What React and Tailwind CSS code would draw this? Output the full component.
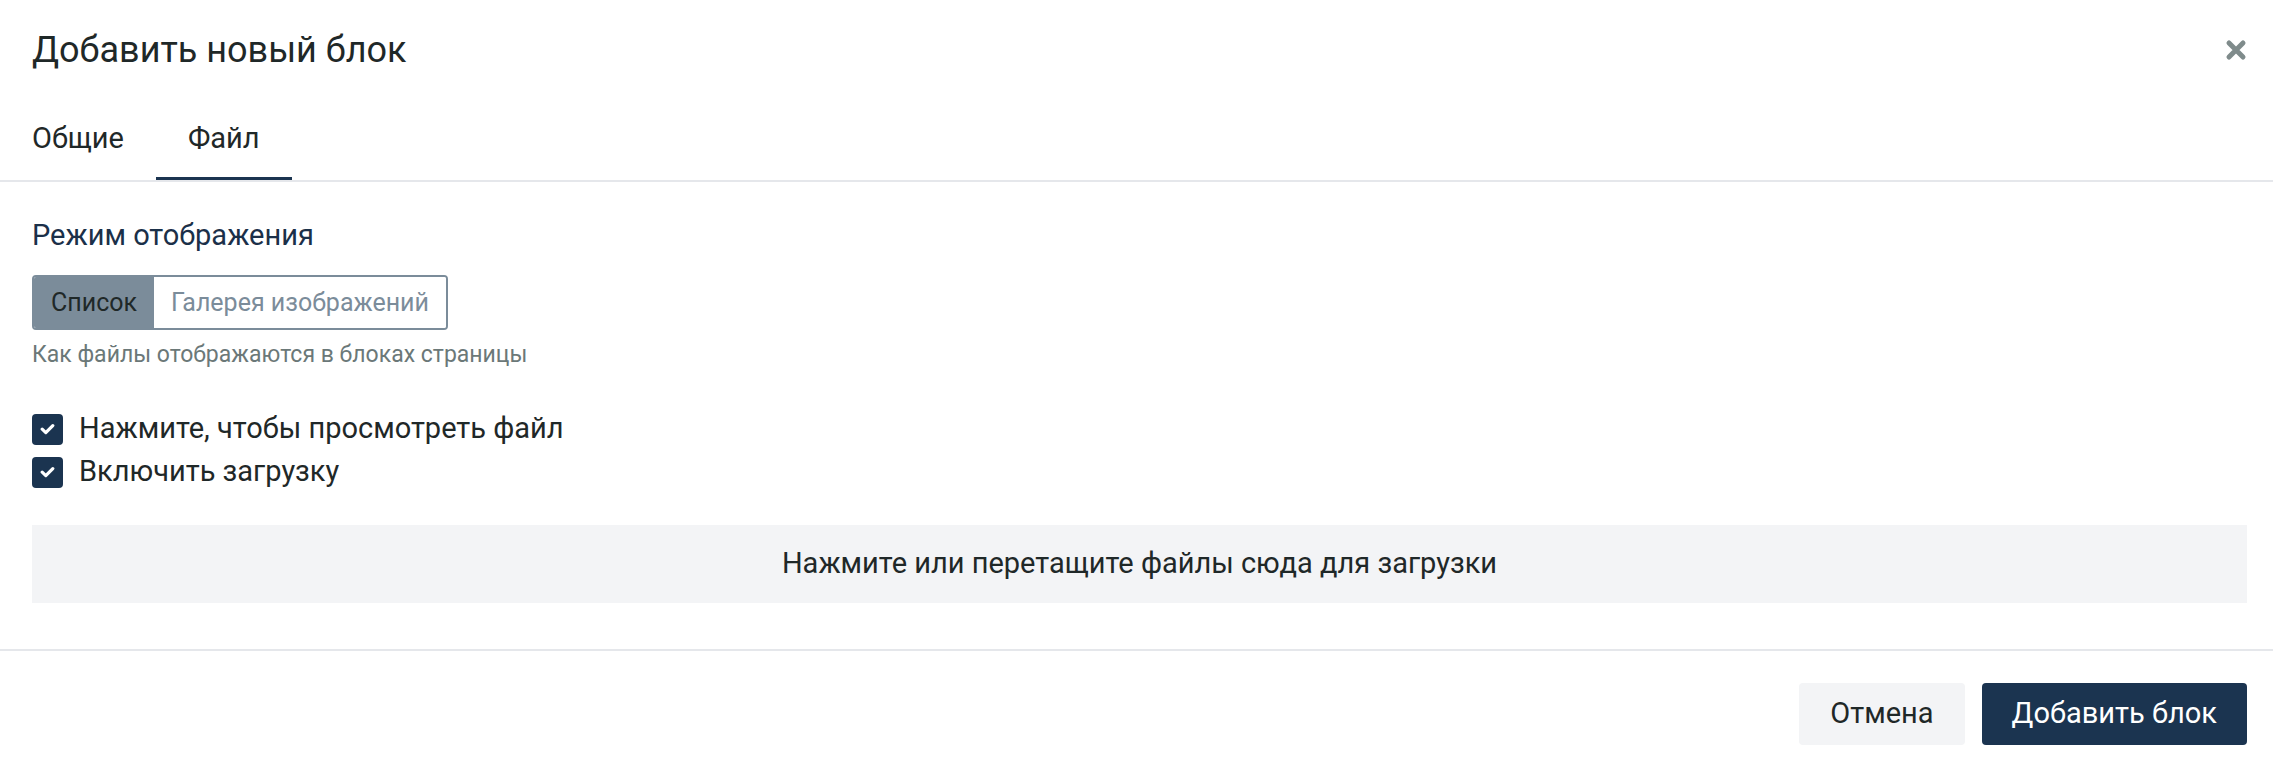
import { useState } from "react";

function CheckIcon() {
  return (
    <svg width="15" height="12" viewBox="0 0 15 12" fill="none">
      <path d="M2.2 6.2 L5.8 9.6 L12.8 2.6" stroke="#ffffff" strokeWidth="3.2" strokeLinecap="round" strokeLinejoin="round" />
    </svg>
  );
}

function CloseIcon() {
  return (
    <svg width="22" height="22" viewBox="0 0 22 22" fill="none">
      <path d="M4 4 L18 18 M18 4 L4 18" stroke="#7f8b8b" strokeWidth="5" strokeLinecap="round" />
    </svg>
  );
}

function Checkbox({ label, checked, onChange }) {
  return (
    <label className="flex items-center gap-[16px] cursor-pointer h-[40px]">
      <span
        onClick={() => onChange(!checked)}
        className={`w-[31px] h-[31px] rounded-[4px] flex items-center justify-center ${
          checked ? "bg-[#1b3450]" : "border-2 border-[#7b8c9a] bg-white"
        }`}
      >
        {checked && <CheckIcon />}
      </span>
      <span className="text-[29px] text-[#1f2828]">{label}</span>
    </label>
  );
}

export default function App() {
  const [tab, setTab] = useState("file");
  const [mode, setMode] = useState("list");
  const [preview, setPreview] = useState(true);
  const [download, setDownload] = useState(true);

  return (
    <div className="w-[2273px] h-[772px] bg-white" style={{ fontFamily: "Roboto, 'Liberation Sans', sans-serif" }}>
      <div className="h-[100px] flex items-center justify-between pl-[32px] pr-[26px]">
        <h2 className="text-[36px] text-[#1f2828]">Добавить новый блок</h2>
        <button className="w-[22px] h-[22px] flex items-center justify-center">
          <CloseIcon />
        </button>
      </div>

      <div className="flex border-b-2 border-[#e5e7eb]">
        {[
          { key: "general", label: "Общие" },
          { key: "file", label: "Файл" },
        ].map((t) => (
          <button
            key={t.key}
            onClick={() => setTab(t.key)}
            className={`h-[80px] px-[32px] text-[29px] text-[#1f2828] flex items-center border-b-[3px] ${
              tab === t.key ? "border-[#1b3450]" : "border-transparent"
            }`}
          >
            {t.label}
          </button>
        ))}
      </div>

      <div className="pl-[32px] pr-[26px] pt-[35px] pb-[46px] border-b-2 border-[#e5e7eb]">
        <div className="text-[29px] leading-[36px] text-[#1b3049]">Режим отображения</div>
        <div className="mt-[22px] inline-flex h-[55px] border-2 border-[#7b8c9a] rounded-[4px] overflow-hidden">
          <button
            onClick={() => setMode("list")}
            className={`px-[17px] text-[25px] ${mode === "list" ? "bg-[#7b8c9a] text-[#1f2828]" : "bg-white text-[#7b8c9a]"}`}
          >
            Список
          </button>
          <button
            onClick={() => setMode("gallery")}
            className={`px-[17px] text-[25px] ${mode === "gallery" ? "bg-[#7b8c9a] text-[#1f2828]" : "bg-white text-[#7b8c9a]"}`}
          >
            Галерея изображений
          </button>
        </div>
        <div className="mt-[11px] text-[23px] leading-[28px] text-[#6b7878]">Как файлы отображаются в блоках страницы</div>

        <div className="mt-[40px] flex flex-col gap-[3px]">
          <Checkbox label="Нажмите, чтобы просмотреть файл" checked={preview} onChange={setPreview} />
          <Checkbox label="Включить загрузку" checked={download} onChange={setDownload} />
        </div>

        <div className="mt-[33px] h-[78px] bg-[#f3f4f6] flex items-center justify-center text-[29px] text-[#1f2828] cursor-pointer">
          Нажмите или перетащите файлы сюда для загрузки
        </div>
      </div>

      <div className="flex justify-end gap-[17px] pl-[32px] pr-[26px] pt-[32px]">
        <button className="h-[62px] px-[31px] rounded-[4px] bg-[#f3f4f6] text-[29px] text-[#1f2828]">Отмена</button>
        <button className="h-[62px] px-[30px] rounded-[4px] bg-[#1b3450] text-[29px] text-white">Добавить блок</button>
      </div>
    </div>
  );
}
